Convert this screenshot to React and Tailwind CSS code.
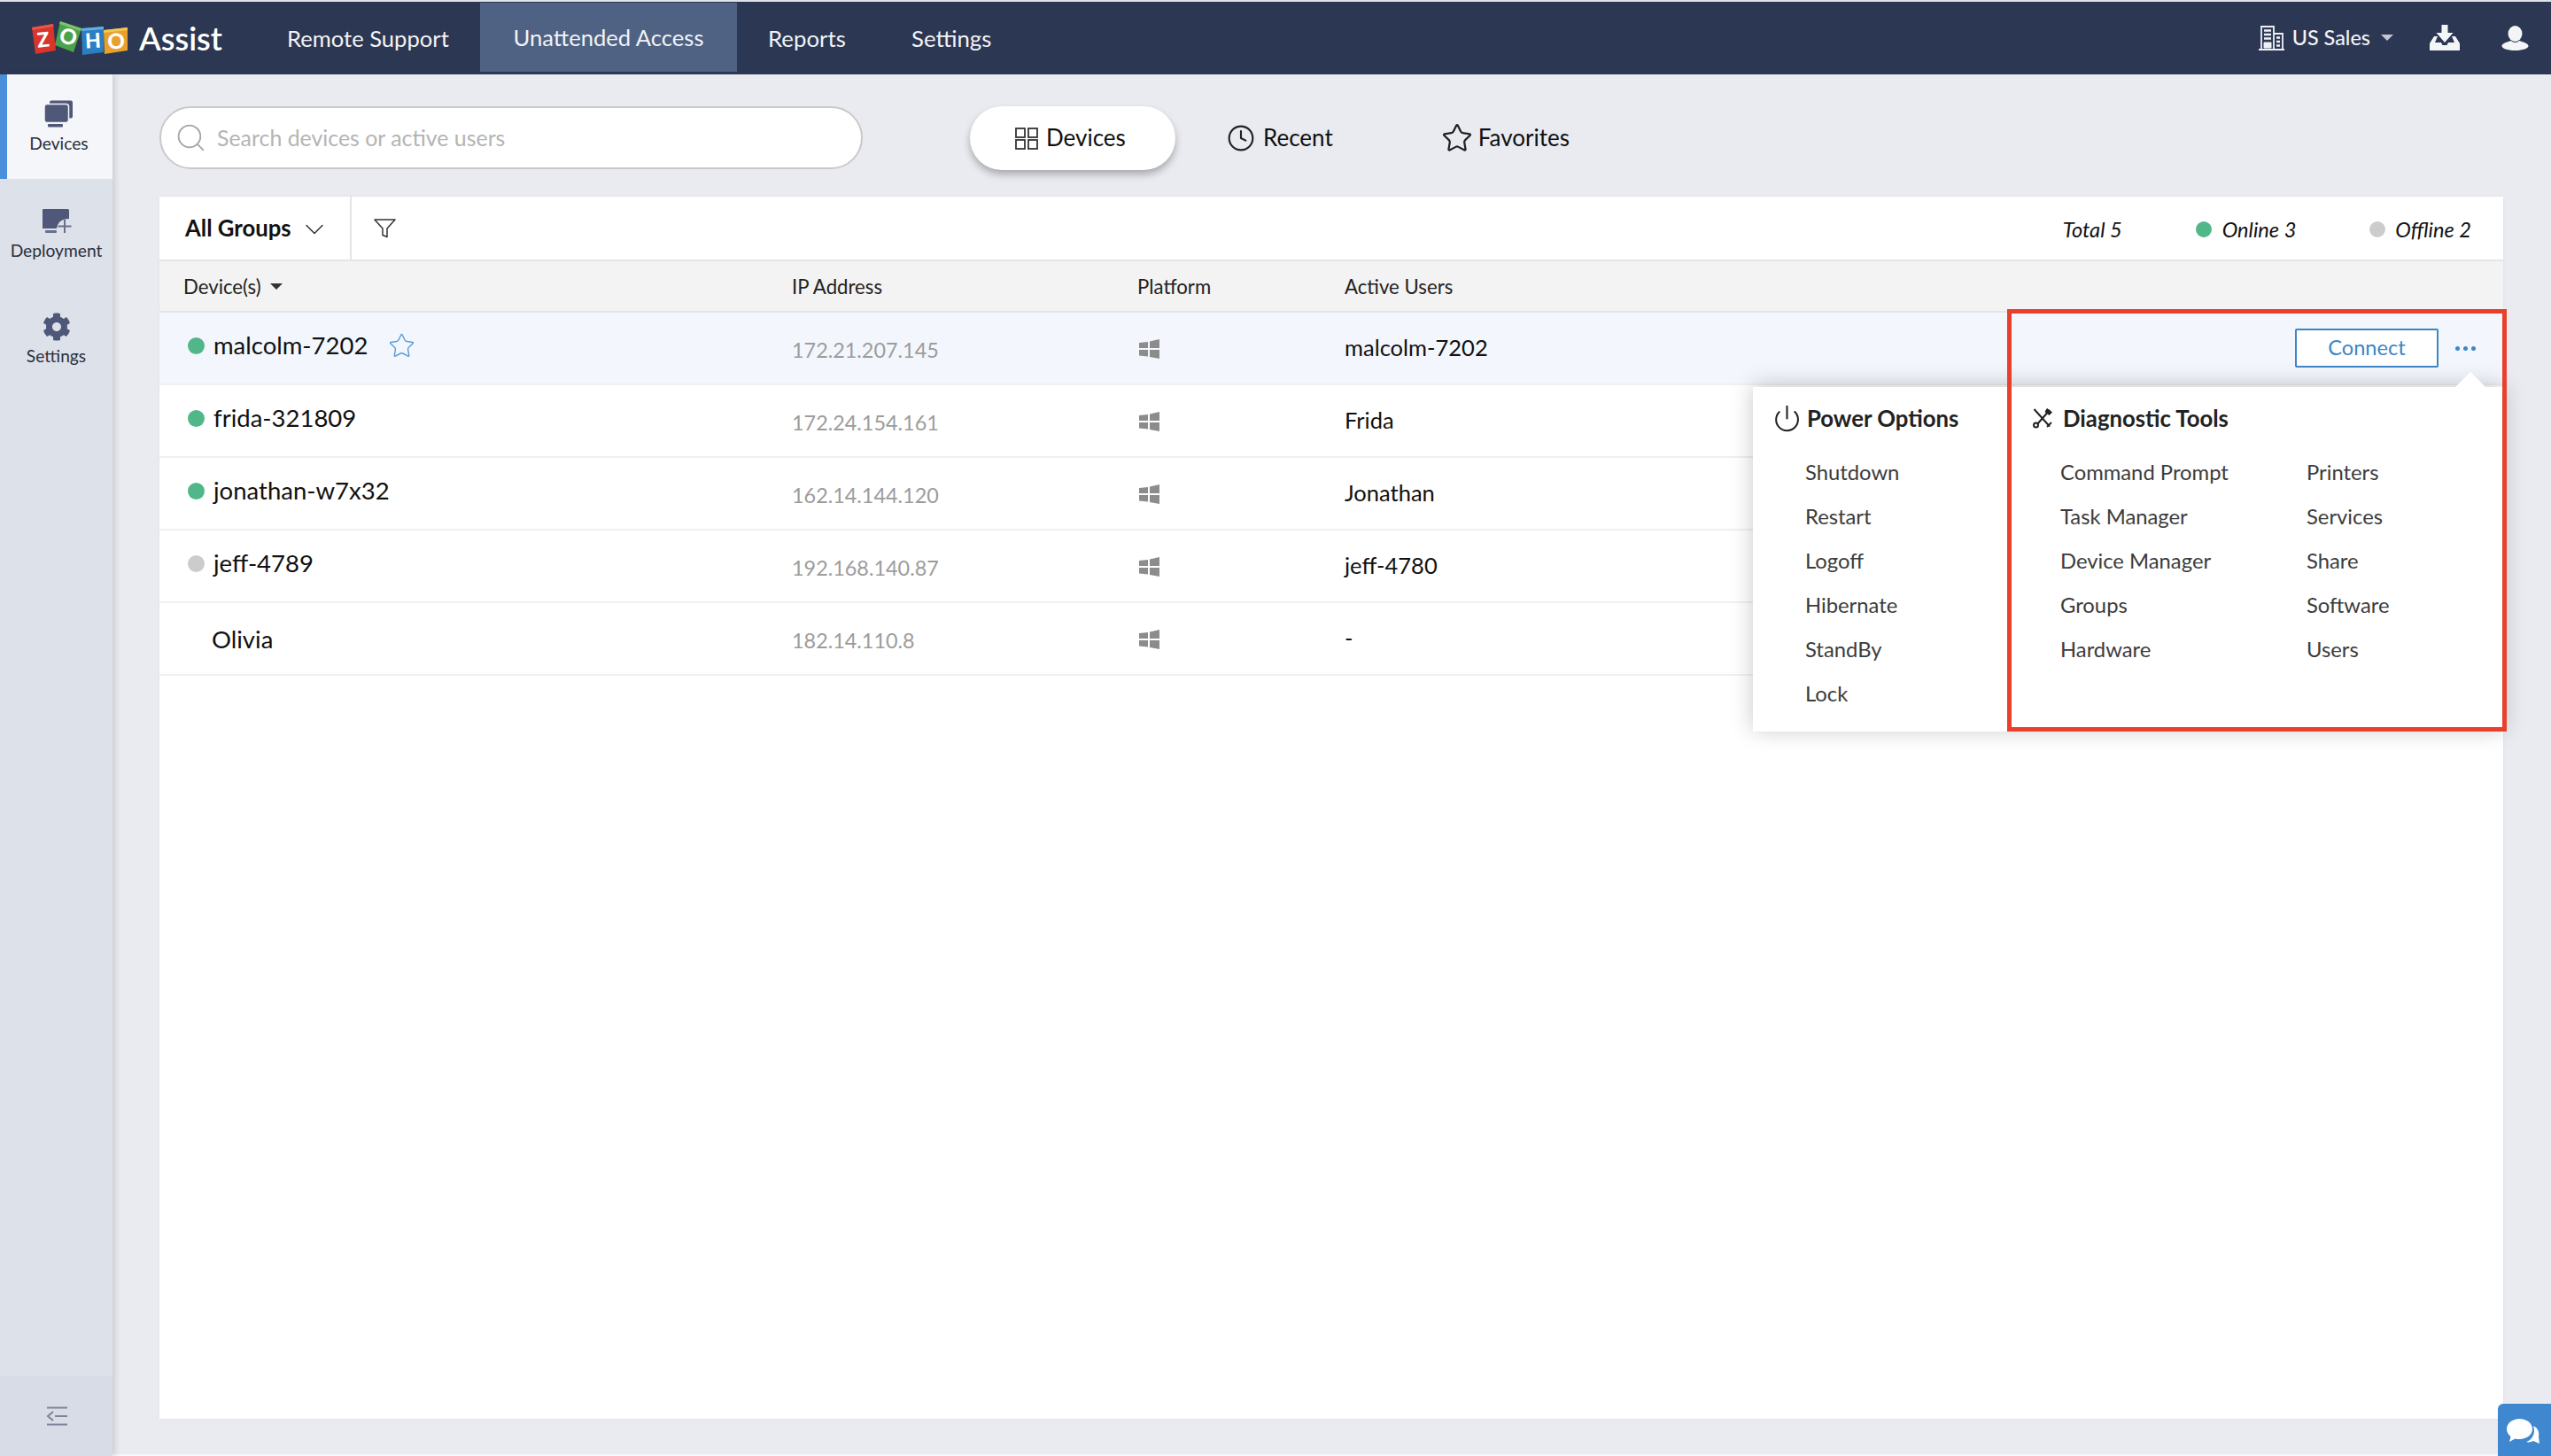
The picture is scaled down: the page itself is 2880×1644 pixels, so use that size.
import React from "react";
import { Search, Clock, Star, Power, ChevronDown } from "lucide-react";
import { FaCog } from "react-icons/fa";

function Logo() {
  return (
    <svg width="108" height="38" viewBox="0 0 108 38" className="shrink-0">
      <polygon points="0,7 24,3 27,33 4,37" fill="#d8352c" />
      <polygon points="0,7 24,3 24.5,6 0.5,10" fill="#e8574a" />
      <polygon points="32,0 56,8 47,35 26,27" fill="#4aa34a" />
      <polygon points="32,0 56,8 55,11 31,3" fill="#7cc46c" />
      <polygon points="56,8 81,6 81,35 57,38" fill="#2a7fc4" />
      <polygon points="56,8 81,6 81,9 56,11" fill="#63b0e4" />
      <polygon points="81,10 108,7 108,33 82,37" fill="#e9a12d" />
      <polygon points="81,10 108,7 108,10 81,13" fill="#f6c653" />
      <text x="13" y="29" fontSize="23" fontWeight="900" fill="#fff" textAnchor="middle" fontFamily="Lato, sans-serif" transform="rotate(-6 13 22)">Z</text>
      <text x="41" y="26" fontSize="24" fontWeight="900" fill="#fff" textAnchor="middle" fontFamily="Lato, sans-serif" transform="rotate(18 41 18)">O</text>
      <text x="69" y="30" fontSize="23" fontWeight="900" fill="#fff" textAnchor="middle" fontFamily="Lato, sans-serif" transform="rotate(-3 69 22)">H</text>
      <text x="95" y="31" fontSize="24" fontWeight="900" fill="#fff" textAnchor="middle" fontFamily="Lato, sans-serif" transform="rotate(-4 95 22)">O</text>
    </svg>
  );
}

function DevicesIcon() {
  return (
    <svg width="33" height="31" viewBox="0 0 33 31">
      <rect x="6" y="0.500" width="26" height="20" rx="2" fill="#4f5878" />
      <rect x="0" y="4.500" width="27.500" height="21" rx="3" fill="#4f5878" stroke="#f5f6f9" strokeWidth="1.500" />
      <rect x="4" y="27" width="17" height="3.500" rx="1" fill="#4f5878" />
    </svg>
  );
}

function DeploymentIcon() {
  return (
    <svg width="34" height="29" viewBox="0 0 34 29" fill="none">
      <path d="M1.500 1h28a1.500 1.500 0 0 1 1.500 1.500V12C23 12 18 16 17 23H1V2z" fill="#4f5878" />
      <rect x="4" y="25" width="13" height="3" rx="1" fill="#6a7088" />
      <path d="M26 13v15M18.500 20.500h15" stroke="#6a7088" strokeWidth="2" />
    </svg>
  );
}

function GridIcon() {
  return (
    <svg width="26" height="25" viewBox="0 0 26 25" fill="none" stroke="#333" strokeWidth="1.800">
      <rect x="1" y="1" width="10" height="10" />
      <rect x="15" y="1" width="10" height="10" />
      <rect x="1" y="14" width="10" height="10" />
      <rect x="15" y="14" width="10" height="10" />
    </svg>
  );
}

function FunnelIcon() {
  return (
    <svg width="25" height="22" viewBox="0 0 25 22" fill="none" stroke="#333" strokeWidth="1.500" strokeLinejoin="round">
      <path d="M1 1h23l-9 10v9.500l-5-2V11z" />
    </svg>
  );
}

function BuildingIcon() {
  return (
    <svg width="31" height="28" viewBox="0 0 31 28" fill="none" stroke="#eef0f4" strokeWidth="1.800">
      <path d="M4 27V1h14v26M18 9h10v18M1 27h29" />
      <path d="M7 5.500h8M7 10h8M7 14.500h8" strokeWidth="2.400" />
      <path d="M7 19h8v6H7z" fill="#eef0f4" strokeWidth="1" />
      <path d="M21 13.500h4M21 18h4M21 22.500h4" strokeWidth="2.400" />
    </svg>
  );
}

function DownloadIcon() {
  return (
    <svg width="34" height="30" viewBox="0 0 34 30" fill="#f4f5f7">
      <path d="M13.500 0h7v9h6L17 20 7.500 9h6z" />
      <path d="M5 13h4l-3 7h7l1.500 3h5l1.500-3h7l-3-7h4l5 8v8H0v-8z" />
    </svg>
  );
}

function UserIcon() {
  return (
    <svg width="31" height="28" viewBox="0 0 31 28" fill="#f4f5f7">
      <ellipse cx="15.500" cy="9" rx="8" ry="9" />
      <path d="M11 17c2 2.500 7 2.500 9 0 5 1.500 10.500 3 10.500 6 0 2.500-6 5-15 5S.5 25.500.5 23c0-3 5.500-4.500 10.500-6z" />
    </svg>
  );
}

function ToolsIcon() {
  return (
    <svg width="24" height="24" viewBox="0 0 24 24" fill="none" stroke="#222" strokeWidth="2">
      <path d="M2.500 2 20 21.500" />
      <path d="M20 3 6 19" />
      <path d="M17 1.500l5.500 4-3 3-4.500-3.500z" fill="#222" strokeWidth="1" />
      <circle cx="4.500" cy="20" r="2.500" />
      <path d="M17 22l5-5" strokeWidth="1.800" />
    </svg>
  );
}

function CollapseIcon() {
  return (
    <svg width="24" height="22" viewBox="0 0 24 22" fill="none" stroke="#7d8396" strokeWidth="2">
      <path d="M1 1.500h23M1 20.500h23M8 6l-6 5 6 5M10 11h14" />
    </svg>
  );
}

function ChatIcon() {
  return (
    <svg width="38" height="30" viewBox="0 0 38 30" fill="#fff">
      <path d="M30 8c5 2 7 7 6 12l1 8-7-3c-2 1-5 2-8 1 7-2 11-10 8-18z" />
      <path d="M14.500 0C22.500 0 29 5 29 11.500S22.500 23 14.500 23c-2 0-3-.2-5-.6L3 26l1.500-6C1.800 18 0 15 0 11.500 0 5 6.500 0 14.500 0z" />
    </svg>
  );
}

function WindowsIcon() {
  return (
    <svg width="23" height="22" viewBox="0 0 23 22" fill="#8c8c8c">
      <polygon points="0,4 10,3 10,10 0,10" />
      <polygon points="12,2.500 23,0 23,10 12,10" />
      <polygon points="0,12 10,12 10,19.500 0,18.500" />
      <polygon points="12,12 23,12 23,22 12,20" />
    </svg>
  );
}

const rows = [
  { name: "malcolm-7202", ip: "172.21.207.145", user: "malcolm-7202", dot: "bg-[#52b788]", active: true },
  { name: "frida-321809", ip: "172.24.154.161", user: "Frida", dot: "bg-[#52b788]" },
  { name: "jonathan-w7x32", ip: "162.14.144.120", user: "Jonathan", dot: "bg-[#52b788]" },
  { name: "jeff-4789", ip: "192.168.140.87", user: "jeff-4780", dot: "bg-[#cccccc]" },
  { name: "Olivia", ip: "182.14.110.8", user: "-", dot: "" },
];

function SideItem({ icon, label, active, h }) {
  return (
    <div className={`flex flex-col items-center shrink-0 ${h} ${active ? "bg-[#f5f6f9] border-l-[8px] border-[#4a8fd9] pt-[29px] pr-[2px]" : "pt-[32px]"}`}>
      <div className="h-[31px] flex items-center justify-center">{icon}</div>
      <span className="text-[19.200px] leading-[24px] mt-[6px] text-[#2a2f3a] whitespace-nowrap">{label}</span>
    </div>
  );
}

export default function App() {
  return (
    <div className="relative w-[2880px] h-[1644px] overflow-hidden flex flex-col bg-[#eaebf0] [font-family:Lato,sans-serif] text-[#111]">
      <div className="h-[2px] bg-[#dfe4e9] shrink-0" />
      <header className="h-[82px] shrink-0 bg-[#2c3753] flex items-center text-[#f2f3f6]">
        <div className="pl-[36px] flex items-center w-[324px] shrink-0">
          <Logo />
          <span className="ml-[13px] text-[36px] leading-[40px] font-semibold text-white">Assist</span>
        </div>
        <span className="w-[218px] text-[25.600px] shrink-0">Remote Support</span>
        <div className="w-[290px] h-[78px] mb-[2px] shrink-0 bg-[#4f6283] flex items-center justify-center text-[25.600px]">Unattended Access</div>
        <span className="ml-[35px] w-[162px] text-[25.800px] shrink-0">Reports</span>
        <span className="text-[25.800px] shrink-0">Settings</span>
        <div className="ml-auto flex items-center pr-[25px]">
          <BuildingIcon />
          <span className="ml-[8px] text-[23.400px] font-medium">US Sales</span>
          <span className="ml-[12px] w-0 h-0 border-x-[7px] border-x-transparent border-t-[7px] border-t-[#c3c7d0]" />
          <span className="ml-[41px]"><DownloadIcon /></span>
          <span className="ml-[47px]"><UserIcon /></span>
        </div>
      </header>
      <div className="flex flex-1 min-h-0">
        <aside className="w-[127px] shrink-0 bg-[#dde1ea] flex flex-col shadow-[3px_0_6px_rgba(60,70,90,0.18)] z-10">
          <SideItem active h="h-[118px]" label="Devices" icon={<DevicesIcon />} />
          <SideItem h="h-[119px]" label="Deployment" icon={<DeploymentIcon />} />
          <SideItem h="h-[119px]" label="Settings" icon={<FaCog size={32} color="#4f5878" />} />
          <div className="flex-1" />
          <div className="h-[92px] shrink-0 bg-[#d8dce6] border-t border-[#e3e6ee] flex items-start justify-center pt-[35px]">
            <CollapseIcon />
          </div>
        </aside>
        <main className="flex-1 min-w-0 pl-[53px] pr-[54px] flex flex-col border-b-2 border-[#f6f7f9]">
          <div className="h-[138px] shrink-0 flex items-start pt-[36px]">
            <div className="w-[794px] h-[71px] rounded-full bg-white border-2 border-[#c9c9c9] flex items-center pl-[15px] shrink-0">
              <Search size={37} strokeWidth={1.200} color="#a6a6a6" />
              <span className="ml-[11px] text-[24.900px] text-[#b4b4b4]">Search devices or active users</span>
            </div>
            <div className="ml-[121px] w-[232px] h-[72px] rounded-full bg-white shadow-[0_5px_8px_rgba(0,0,0,0.28)] flex items-center pl-[51px] gap-[9px] shrink-0 text-[26px]">
              <GridIcon /><span className="mb-[2px]">Devices</span>
            </div>
            <div className="ml-[58px] h-[72px] flex items-center gap-[9px] text-[26px] shrink-0">
              <Clock size={32} strokeWidth={1.600} color="#222" /><span className="mb-[2px]">Recent</span>
            </div>
            <div className="ml-[122px] h-[72px] flex items-center gap-[6px] text-[26px] shrink-0">
              <Star size={36} strokeWidth={1.500} color="#222" /><span className="mb-[2px]">Favorites</span>
            </div>
          </div>
          <section className="h-[1380px] shrink-0 bg-white flex flex-col shadow-[0_0_3px_rgba(0,0,0,0.06)]">
            <div className="h-[73px] shrink-0 flex items-center border-b-2 border-[#e6e6e6]">
              <div className="w-[217px] h-full flex items-center pl-[29px] border-r-2 border-[#e4e4e4] shrink-0">
                <span className="text-[25.700px] font-bold">All Groups</span>
                <ChevronDown size={36} strokeWidth={1} color="#333" className="ml-[8px] mt-[2px]" />
              </div>
              <span className="ml-[25px]"><FunnelIcon /></span>
              <div className="ml-auto flex items-center pr-[36px] italic text-[23.600px] pt-[4px]">
                <span>Total 5</span>
                <span className="ml-[83px] w-[18px] h-[18px] rounded-full bg-[#52b788]" />
                <span className="ml-[12px]">Online 3</span>
                <span className="ml-[83px] w-[18px] h-[18px] rounded-full bg-[#cccccc]" />
                <span className="ml-[11px]">Offline 2</span>
              </div>
            </div>
            <div className="h-[58px] shrink-0 bg-[#f3f3f3] border-b-2 border-[#e4e4e4] flex items-center text-[22.200px] text-[#222] pt-[1px]">
              <div className="w-[714px] pl-[27px] flex items-center shrink-0">
                <span>Device(s)</span>
                <span className="ml-[10px] w-0 h-0 border-x-[7px] border-x-transparent border-t-[7px] border-t-[#333]" />
              </div>
              <span className="w-[390px] shrink-0">IP Address</span>
              <span className="w-[234px] shrink-0">Platform</span>
              <span>Active Users</span>
            </div>
            {rows.map((r) => (
              <div key={r.name} className={`h-[82px] shrink-0 flex items-center border-b-2 border-[#f0f0f0] ${r.active ? "bg-[#f3f7fd]" : "bg-white"}`}>
                <div className="w-[714px] pl-[32px] flex items-center shrink-0 pb-[6px]">
                  <span className={`w-[19px] h-[19px] rounded-full shrink-0 ${r.dot}`} />
                  <span className={`text-[27.500px] ${r.dot ? "ml-[10px]" : "ml-[8px] mt-[8px]"}`}>{r.name}</span>
                  {r.active && <Star size={31} strokeWidth={1.100} color="#5b9bd5" className="ml-[23px]" />}
                </div>
                <span className="w-[390px] shrink-0 text-[23.400px] text-[#9c9c9c] pt-[5px]">{r.ip}</span>
                <span className="w-[234px] shrink-0 pl-[2px] pt-[1px]"><WindowsIcon /></span>
                <span className="text-[25.500px] pb-[2px]">{r.user}</span>
                {r.active && (
                  <div className="ml-auto flex items-center pr-[31px]">
                    <div className="w-[162px] h-[44px] bg-white border-2 border-[#3d86c6] rounded-[2px] flex items-center justify-center text-[23.600px] text-[#3d86c6]">Connect</div>
                    <div className="ml-[19px] flex gap-[4px]">
                      <span className="w-[5px] h-[5px] rounded-full bg-[#3d86c6]" />
                      <span className="w-[5px] h-[5px] rounded-full bg-[#3d86c6]" />
                      <span className="w-[5px] h-[5px] rounded-full bg-[#3d86c6]" />
                    </div>
                  </div>
                )}
              </div>
            ))}
          </section>
        </main>
      </div>

      {/* Popup menu */}
      <div className="absolute left-[1979px] top-[437px] w-[847px] h-[389px] bg-white shadow-[0_-2px_24px_rgba(0,0,0,0.22)] flex z-20 text-[23.800px] text-[#3c3c3c]">
        <div className="absolute right-[20px] top-[-17px] w-0 h-0 border-x-[17px] border-x-transparent border-b-[17px] border-b-white" />
        <div className="w-[287px] shrink-0 pl-[22px] pt-[20px]">
          <div className="flex items-center h-[30px] gap-[6px]">
            <Power size={33} strokeWidth={1.500} color="#222" />
            <span className="text-[25.700px] font-bold text-[#222]">Power Options</span>
          </div>
          <div className="mt-[22px] pl-[37px] flex flex-col">
            {["Shutdown", "Restart", "Logoff", "Hibernate", "StandBy", "Lock"].map((t) => (
              <span key={t} className="h-[50px] flex items-center">{t}</span>
            ))}
          </div>
        </div>
        <div className="flex-1 pl-[28px] pt-[20px]">
          <div className="flex items-center h-[30px] gap-[11px]">
            <ToolsIcon />
            <span className="text-[25.700px] font-bold text-[#222]">Diagnostic Tools</span>
          </div>
          <div className="mt-[22px] pl-[32px] grid grid-cols-[278px_1fr]">
            {[
              "Command Prompt", "Printers", "Task Manager", "Services", "Device Manager", "Share",
              "Groups", "Software", "Hardware", "Users",
            ].map((t) => (
              <span key={t} className="h-[50px] flex items-center">{t}</span>
            ))}
          </div>
        </div>
      </div>

      {/* Red annotation frame */}
      <div className="absolute left-[2266px] top-[349px] w-[564px] h-[477px] border-[5px] border-[#e8402c] z-30" />

      {/* Chat widget */}
      <div className="absolute left-[2820px] top-[1585px] w-[60px] h-[59px] bg-[#3f87cf] rounded-tl-[6px] z-30 flex items-start pl-[10px] pt-[17px]">
        <ChatIcon />
      </div>
    </div>
  );
}
